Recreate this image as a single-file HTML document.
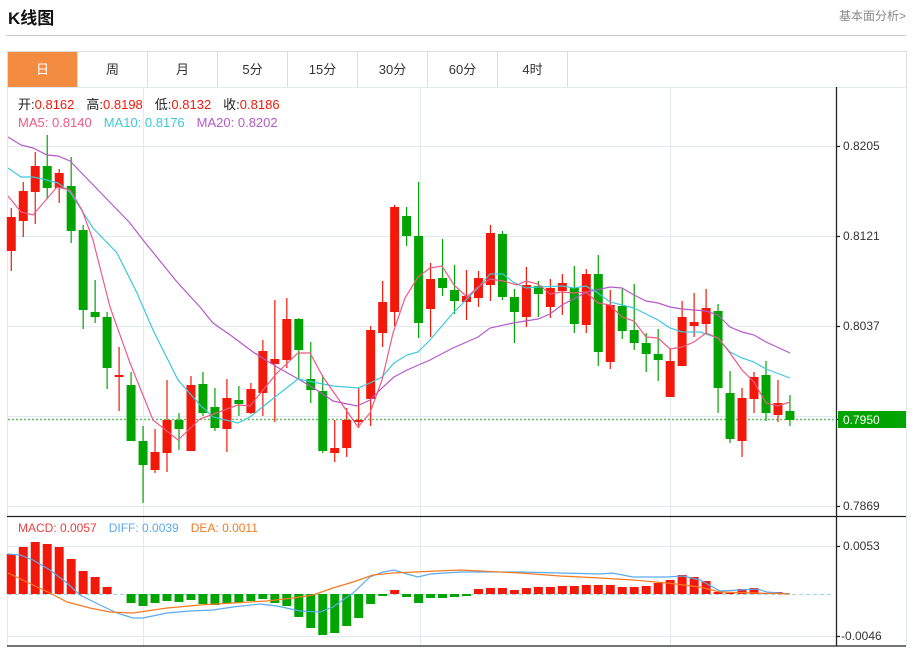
<!DOCTYPE html>
<html><head><meta charset="utf-8"><style>
body{margin:0;background:#fff;width:914px;height:648px;overflow:hidden;font-family:"Liberation Sans","Noto Sans CJK SC",sans-serif;position:relative}
.t{position:absolute;white-space:nowrap}
.tabs{position:absolute;left:7px;top:51px;width:898px;height:35px;border:1px solid #ddd;border-bottom:none;display:flex}
.tab{width:69px;border-right:1px solid #ddd;text-align:center;line-height:35px;font-size:13px;color:#333}
.tab.on{background:#f38c40;color:#fff}
</style></head><body>
<div class="t" style="left:8px;top:4px;font-size:17px;font-weight:bold;color:#111">K线图</div>
<div class="t" style="right:8px;top:7px;font-size:12px;color:#888">基本面分析&gt;</div>
<div style="position:absolute;left:6px;top:35px;width:900px;height:1px;background:#ccc"></div>
<div class="tabs"><div class="tab on">日</div><div class="tab">周</div><div class="tab">月</div><div class="tab">5分</div><div class="tab">15分</div><div class="tab">30分</div><div class="tab">60分</div><div class="tab">4时</div></div>
<svg style="position:absolute;left:0;top:0" width="914" height="648" xmlns="http://www.w3.org/2000/svg">
<g stroke="#e2eaf1" stroke-width="1" fill="none">
<path d="M7.5 87V646M906.5 87V646M7 87.5H906"/>
<path d="M143.5 87V646M420.5 87V646M670.5 87V646"/>
<path d="M8 146.5H836M8 236.5H836M8 326.5H836M8 416.5H836M8 506.5H836M8 546.5H836M8 636.5H836"/>
</g>
<path d="M8 419.5H836" stroke="#5fc25f" stroke-width="1.5" stroke-dasharray="2,2"/>
<path d="M8 594.5H834" stroke="#9fd6ee" stroke-width="1" stroke-dasharray="4,3"/>
<g transform="translate(0.3,0) scale(0.9983,1)">
<path fill="#f2190a" d="M6.5 217h9V251h-9z M18.5 191h9V221h-9z M30.5 166h9V192h-9z M54.5 173h9V188h-9z M114.5 375h9V377h-9z M150.5 452h9V470h-9z M162.5 420h9V453h-9z M186.5 385h9V451h-9z M222.5 398h9V429h-9z M246.5 389h9V413h-9z M258.5 351h9V393h-9z M270.5 359h9V364h-9z M282.5 319h9V360h-9z M330.5 448h9V453h-9z M342.5 420h9V448h-9z M354.5 420h9V422h-9z M366.5 330h9V399h-9z M378.5 302h9V333h-9z M390.5 207h9V312h-9z M426.5 279h9V309h-9z M462.5 296h9V302h-9z M474.5 278h9V298h-9z M486.5 233h9V285h-9z M522.5 285h9V317h-9z M546.5 288h9V307h-9z M558.5 283h9V291h-9z M582.5 274h9V325h-9z M606.5 305h9V362h-9z M666.5 361h9V397h-9z M678.5 317h9V366h-9z M690.5 322h9V326h-9z M702.5 308h9V324h-9z M738.5 398h9V441h-9z M750.5 377h9V399h-9z M774.5 403h9V415h-9z"/>
<path stroke="#f2190a" stroke-width="1.2" fill="none" d="M11 208V271 M23 182V237 M35 152V224 M59 169V203 M119 347V411 M155 429V473 M167 380V472 M191 376V451 M227 379V452 M251 383V414 M263 340V416 M275 300V422 M287 298V368 M335 420V462 M347 408V457 M359 388V428 M371 326V426 M383 281V347 M395 205V326 M431 263V337 M467 270V320 M479 271V307 M491 225V301 M527 267V327 M551 279V318 M563 274V315 M587 269V333 M611 290V369 M671 349V397 M683 301V366 M695 293V337 M707 289V334 M743 388V457 M755 372V413 M779 380V422"/>
<path fill="#02a402" d="M42.5 166h9V188h-9z M66.5 186h9V231h-9z M78.5 230h9V310h-9z M90.5 312h9V317h-9z M102.5 317h9V368h-9z M126.5 385h9V441h-9z M138.5 441h9V465h-9z M174.5 420h9V429h-9z M198.5 384h9V413h-9z M210.5 407h9V428h-9z M234.5 400h9V404h-9z M294.5 319h9V350h-9z M306.5 379h9V390h-9z M318.5 391h9V451h-9z M402.5 216h9V236h-9z M414.5 236h9V323h-9z M438.5 278h9V288h-9z M450.5 290h9V301h-9z M498.5 234h9V297h-9z M510.5 297h9V312h-9z M534.5 286h9V294h-9z M570.5 288h9V324h-9z M594.5 274h9V352h-9z M618.5 306h9V331h-9z M630.5 330h9V343h-9z M642.5 343h9V354h-9z M654.5 354h9V360h-9z M714.5 311h9V388h-9z M726.5 393h9V439h-9z M762.5 375h9V413h-9z M786.5 411h9V420h-9z"/>
<path stroke="#02a402" stroke-width="1.2" fill="none" d="M47 135V199 M71 157V243 M83 225V329 M95 280V323 M107 312V389 M131 372V441 M143 426V503 M179 413V450 M203 372V416 M215 388V431 M239 386V416 M299 318V379 M311 342V403 M323 375V453 M407 207V246 M419 182V338 M443 239V296 M455 265V314 M503 231V300 M515 289V343 M539 281V317 M575 266V333 M599 255V366 M623 289V339 M635 284V350 M647 333V372 M659 329V381 M719 304V413 M731 371V443 M767 361V421 M791 395V426"/>
<path fill="#f2190a" d="M6.5 554h9V594h-9z M18.5 547h9V594h-9z M30.5 542h9V594h-9z M42.5 544h9V594h-9z M54.5 547h9V594h-9z M66.5 559h9V594h-9z M78.5 571h9V594h-9z M90.5 577h9V594h-9z M102.5 587h9V594h-9z M390.5 590h9V594h-9z M474.5 589h9V594h-9z M486.5 588h9V594h-9z M498.5 588h9V594h-9z M510.5 590h9V594h-9z M522.5 588h9V594h-9z M534.5 587h9V594h-9z M546.5 587h9V594h-9z M558.5 586h9V594h-9z M570.5 586h9V594h-9z M582.5 585h9V594h-9z M594.5 585h9V594h-9z M606.5 585h9V594h-9z M618.5 587h9V594h-9z M630.5 587h9V594h-9z M642.5 586h9V594h-9z M654.5 583h9V594h-9z M666.5 580h9V594h-9z M678.5 575h9V594h-9z M690.5 577h9V594h-9z M702.5 581h9V594h-9z M714.5 592h9V594h-9z M726.5 593h9V594h-9z M738.5 589h9V594h-9z M750.5 588h9V594h-9z M762.5 593h9V594h-9z M774.5 592h9V594h-9z"/>
<path fill="#02a402" d="M126.5 594h9V603h-9z M138.5 594h9V606h-9z M150.5 594h9V603h-9z M162.5 594h9V601h-9z M174.5 594h9V602h-9z M186.5 594h9V600h-9z M198.5 594h9V604h-9z M210.5 594h9V605h-9z M222.5 594h9V603h-9z M234.5 594h9V603h-9z M246.5 594h9V601h-9z M258.5 594h9V599h-9z M270.5 594h9V603h-9z M282.5 594h9V606h-9z M294.5 594h9V617h-9z M306.5 594h9V628h-9z M318.5 594h9V635h-9z M330.5 594h9V633h-9z M342.5 594h9V626h-9z M354.5 594h9V618h-9z M366.5 594h9V604h-9z M378.5 594h9V596h-9z M402.5 594h9V597h-9z M414.5 594h9V603h-9z M426.5 594h9V598h-9z M438.5 594h9V598h-9z M450.5 594h9V597h-9z M462.5 594h9V596h-9z"/>
</g>
<g fill="none" stroke-width="1.2">
<polyline stroke="#b45ac8" points="8,137 21,145 33,148 47,155 58,156 70,161 100,192 130,223 143,240 177,282 200,307 213,323 233,337 253,352 277,367 300,380 320,392 333,401 357,406 370,400 383,387 394,377 407,370 430,360 453,348 478,337 490,328 513,323 538,319 550,314 562,305 587,292 610,287 622,288 634,295 646,301 658,303 670,307 682,309 706,311 718,315 730,327 742,332 754,335 766,342 790,353"/>
<polyline stroke="#3ec8dc" points="8,168 21,177 33,177 47,180 58,183 70,192 93,228 117,253 137,293 153,330 178,380 200,405 213,417 238,423 250,417 275,397 298,379 313,382 333,386 358,388 370,383 382,377 394,363 407,355 418,352 430,340 453,313 478,288 490,274 503,274 513,282 526,288 538,287 562,286 574,288 586,286 598,293 610,302 634,308 658,320 670,328 682,332 700,332 718,338 730,352 742,358 754,362 766,369 790,378"/>
<polyline stroke="#ec5a86" points="8,196 21,212 33,215 57,187 70,190 82,210 93,240 110,307 130,363 153,420 178,440 200,419 238,405 250,406 277,373 298,353 310,353 323,377 337,397 358,427 370,413 382,380 393,333 405,298 418,277 430,268 442,266 454,285 467,297 478,287 490,279 503,281 517,285 526,281 538,284 550,294 562,292 574,293 586,292 598,303 610,305 622,317 634,321 646,337 658,338 670,349 682,347 694,342 706,333 718,338 730,353 742,370 754,382 766,403 778,406 790,402"/>
<polyline stroke="#5aaaf0" points="8,554 20,555 33,560 50,570 67,583 80,595 100,605 117,613 133,618 143,618 167,613 190,611 213,610 233,607 260,604 277,606 300,611 320,612 333,607 353,593 370,577 383,572 394,570 407,574 418,577 430,574 460,572 520,572 560,573 600,574 612,573 633,577 667,577 683,576 700,580 720,591 740,590 757,589 767,592 790,594"/>
<polyline stroke="#f57a22" points="8,573 33,585 50,593 67,602 90,608 110,612 133,613 167,608 200,605 233,603 267,601 293,598 313,595 333,588 353,582 373,575 393,573 460,570 520,573 560,576 600,578 633,580 667,583 700,587 720,592 790,594"/>
</g>
<g stroke="#222" stroke-width="1.3">
<path d="M836.5 87V646M7 516.5H906M7 646H906"/>
<path d="M836 146.5h4M836 236.5h4M836 326.5h4M836 506.5h4M836 546.5h4M836 636.5h4M836 419.5h4"/>
</g>
<rect x="838" y="411" width="68" height="17" fill="#02a402"/>
<g font-family="Liberation Sans, sans-serif" font-size="12" fill="#333">
<text x="843" y="150">0.8205</text><text x="843" y="240">0.8121</text><text x="843" y="330">0.8037</text><text x="843" y="510">0.7869</text>
<text x="843" y="550">0.0053</text><text x="841" y="640">-0.0046</text>
<text x="843" y="424" fill="#fff">0.7950</text>
</g>
<g font-family="Liberation Sans, Noto Sans CJK SC, sans-serif" font-size="13">
<text x="18" y="109"><tspan fill="#222">开:</tspan><tspan fill="#f2190a">0.8162</tspan><tspan fill="#222" dx="12">高:</tspan><tspan fill="#f2190a">0.8198</tspan><tspan fill="#222" dx="12">低:</tspan><tspan fill="#f2190a">0.8132</tspan><tspan fill="#222" dx="12">收:</tspan><tspan fill="#f2190a">0.8186</tspan></text>
<text x="18" y="127"><tspan fill="#ec5a86">MA5: 0.8140</tspan><tspan fill="#3ec8dc" dx="12">MA10: 0.8176</tspan><tspan fill="#b45ac8" dx="12">MA20: 0.8202</tspan></text>
</g>
<g font-family="Liberation Sans, sans-serif" font-size="12">
<text x="18" y="532"><tspan fill="#e84040">MACD: 0.0057</tspan><tspan fill="#5aaaf0" dx="12">DIFF: 0.0039</tspan><tspan fill="#f57a22" dx="12">DEA: 0.0011</tspan></text>
</g>
</svg>
</body></html>
